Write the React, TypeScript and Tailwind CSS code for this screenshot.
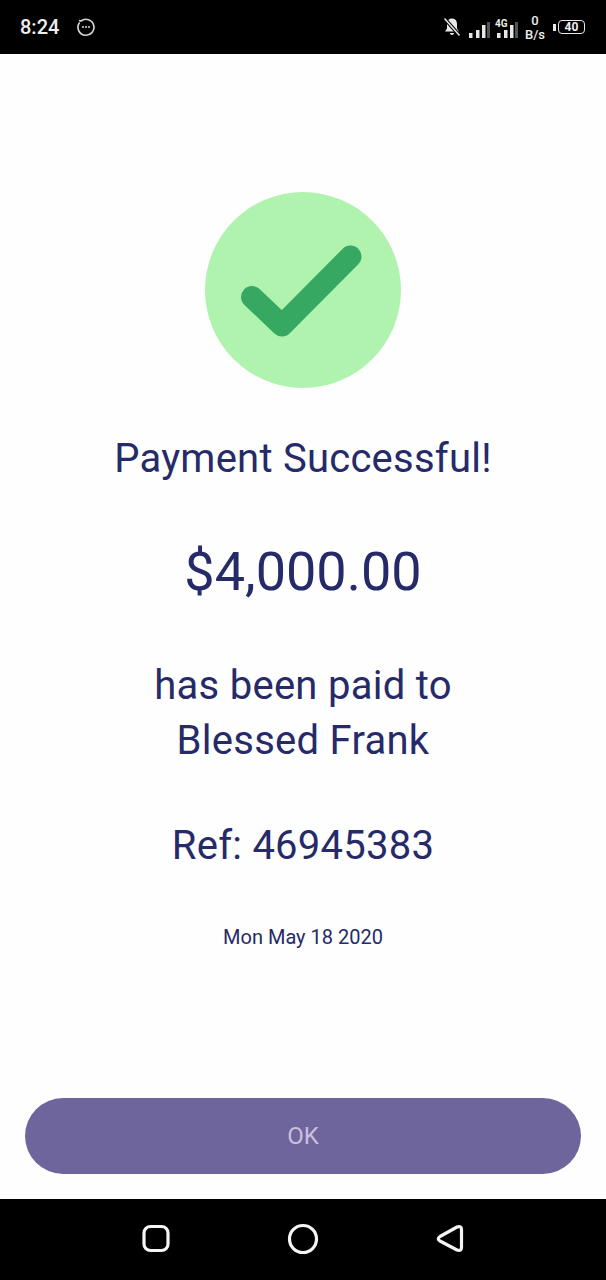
import React from 'react';

const font = { fontFamily: 'Roboto, sans-serif' };

const Bars = ({ className = '' }: { className?: string }) => (
  <svg width="21" height="17" viewBox="0 0 21 17" className={className}>
    <rect x="0" y="11" width="3.500" height="5" fill="#e8e8e8" />
    <rect x="7" y="8" width="3.500" height="8" fill="#e8e8e8" />
    <rect x="13" y="3" width="3.500" height="13" fill="#e8e8e8" />
    <rect x="18" y="0" width="3" height="16" fill="#555555" />
  </svg>
);

const StatusBar = () => (
  <div className="h-[54px] bg-black flex items-center justify-between pl-[20px] pr-[21px] text-[#eeeeee] shrink-0">
    <div className="flex items-center gap-[16px]">
      <span className="text-[20px] font-medium leading-none">8:24</span>
      <svg width="20" height="20" viewBox="0 0 20 20" className="ml-[1px]">
        <path d="M5 4 A8 8 0 1 1 3.200 6" fill="none" stroke="#d8d8d8" strokeWidth="1.600" strokeLinecap="round" />
        <path d="M5 4 L3 3.400" fill="none" stroke="#d8d8d8" strokeWidth="1.600" />
        <circle cx="7" cy="10" r="1" fill="#d8d8d8" />
        <circle cx="10" cy="10" r="1" fill="#d8d8d8" />
        <circle cx="13" cy="10" r="1" fill="#d8d8d8" />
      </svg>
    </div>
    <div className="flex items-center">
      <svg width="18" height="20" viewBox="0 0 18 20" className="mr-[8px]">
        <path d="M9 1.500c-3 0-5 2.200-5 5.500v4.500L2 14.500h14l-2-3V7c0-3.300-2-5.500-5-5.500z" fill="#e8e8e8" />
        <path d="M7 16h4a2 2 0 0 1-4 0z" fill="#e8e8e8" />
        <path d="M1.500 1.500L16.500 18.500" stroke="#000" strokeWidth="3.500" />
        <path d="M1.500 1.500L16.500 18.500" stroke="#e8e8e8" strokeWidth="1.500" />
      </svg>
      <Bars className="mt-[7px] mr-[7px]" />
      <div className="relative mt-[7px]">
        <Bars />
        <span className="absolute left-[-2px] top-[-4px] text-[10px] font-bold leading-[11px]">4G</span>
      </div>
      <div className="flex flex-col items-center text-[13px] font-medium leading-[14px] mt-[2px] ml-[7px] mr-[8px]">
        <span>0</span>
        <span>B/s</span>
      </div>
      <div className="w-[3px] h-[7px] bg-[#e8e8e8] mr-[2px]" />
      <div className="w-[27px] h-[14px] rounded-[4px] border border-[#e8e8e8] flex items-center justify-center text-[12px] font-bold leading-none">
        40
      </div>
    </div>
  </div>
);

const NavBar = () => (
  <div className="h-[81px] bg-black shrink-0 flex items-center justify-center">
    <svg width="606" height="81" viewBox="0 0 606 81" fill="none" stroke="#f5f5f5" strokeWidth="3.200">
      <rect x="144" y="27.500" width="24" height="24" rx="6.500" />
      <circle cx="303" cy="40" r="13.500" />
      <path d="M440 37.500 L457 28 Q461.500 26.500 461.500 30.500 L461.500 48.500 Q461.500 52.500 457 51 L440 42 Q436.500 39.800 440 37.500 Z" strokeLinejoin="round" />
    </svg>
  </div>
);

export default function App() {
  return (
    <div className="w-[606px] h-[1280px] flex flex-col bg-white overflow-hidden text-[#262a68]" style={font}>
      <StatusBar />
      <div className="flex-1 flex flex-col items-center pt-[138px] bg-[#fefefe]">
        <div className="w-[196px] h-[196px] rounded-full bg-[#aff3ae] flex items-center justify-center">
          <svg width="196" height="196" viewBox="0 0 196 196" fill="none">
            <path d="M47 105 L77 133.500 L145.500 64.500" stroke="#37a862" strokeWidth="22" strokeLinecap="round" strokeLinejoin="round" />
          </svg>
        </div>
        <h1 className="mt-[45px] text-[40px] leading-[52px] font-normal tracking-[0.25px]">Payment Successful!</h1>
        <p className="mt-[57px] text-[54px] leading-[60px]">$4,000.00</p>
        <p className="mt-[56px] text-[40px] leading-[55px] text-center tracking-[0.27px]">
          has been paid to
          <br />
          Blessed Frank
        </p>
        <p className="mt-[50px] text-[40px] leading-[55px] tracking-[0.25px]">Ref: 46945383</p>
        <p className="mt-[52px] text-[20px] leading-[24px]">Mon May 18 2020</p>
        <div className="mt-auto mb-[25px] w-[556px] h-[76px] rounded-full bg-[#6f659d] flex items-center justify-center text-[24px] text-[#cbbfdd]">
          OK
        </div>
      </div>
      <NavBar />
    </div>
  );
}
